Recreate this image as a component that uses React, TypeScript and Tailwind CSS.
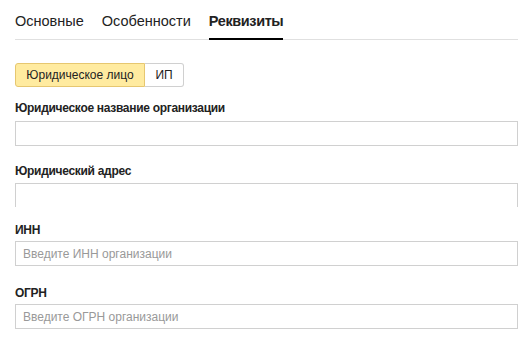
import React from "react";

function Label({ children, className = "" }: { children: React.ReactNode; className?: string }) {
  return (
    <div className={"text-[12px] leading-[14px] font-bold tracking-[-0.3px] text-[#222] " + className}>
      {children}
    </div>
  );
}

function Input({ placeholder }: { placeholder?: string }) {
  return (
    <div className="h-[25px] border border-[#d0d0d0] flex items-center px-[7px] text-[12px] text-[#999]">
      {placeholder}
    </div>
  );
}

export default function App() {
  return (
    <div
      className="w-[531px] h-[346px] bg-white overflow-hidden"
      style={{ fontFamily: '"Liberation Sans", Arial, sans-serif' }}
    >
      <div className="pl-[15px] w-[518px]">
        <div className="flex gap-[18px] h-[40px] border-b border-[#e0e0e0] text-[14.5px] text-[#222]">
          <div className="pt-[11px]">Основные</div>
          <div className="pt-[11px]">Особенности</div>
          <div className="pt-[11px] font-bold tracking-[-0.4px] relative">
            Реквизиты
            <div className="absolute left-0 right-0 bottom-[-1px] h-[2px] bg-black" />
          </div>
        </div>
        <div className="mt-[23px] flex h-[24px] w-[169px] text-[12px] text-[#222]">
          <div className="w-[130px] bg-[#ffeba0] border border-[#e6c770] rounded-l-[3px] flex items-center justify-center">
            Юридическое лицо
          </div>
          <div className="flex-1 border border-l-0 border-[#d0d0d0] rounded-r-[3px] flex items-center justify-center">
            ИП
          </div>
        </div>
        <Label className="mt-[14px]">Юридическое название организации</Label>
        <div className="mt-[6px]">
          <Input />
        </div>
        <Label className="mt-[18px]">Юридический адрес</Label>
        <div className="mt-[5px] h-[24px] border border-b-0 border-[#d0d0d0]" />
        <Label className="mt-[16px]">ИНН</Label>
        <div className="mt-[4px]">
          <Input placeholder="Введите ИНН организации" />
        </div>
        <Label className="mt-[20px]">ОГРН</Label>
        <div className="mt-[4px]">
          <Input placeholder="Введите ОГРН организации" />
        </div>
      </div>
    </div>
  );
}
